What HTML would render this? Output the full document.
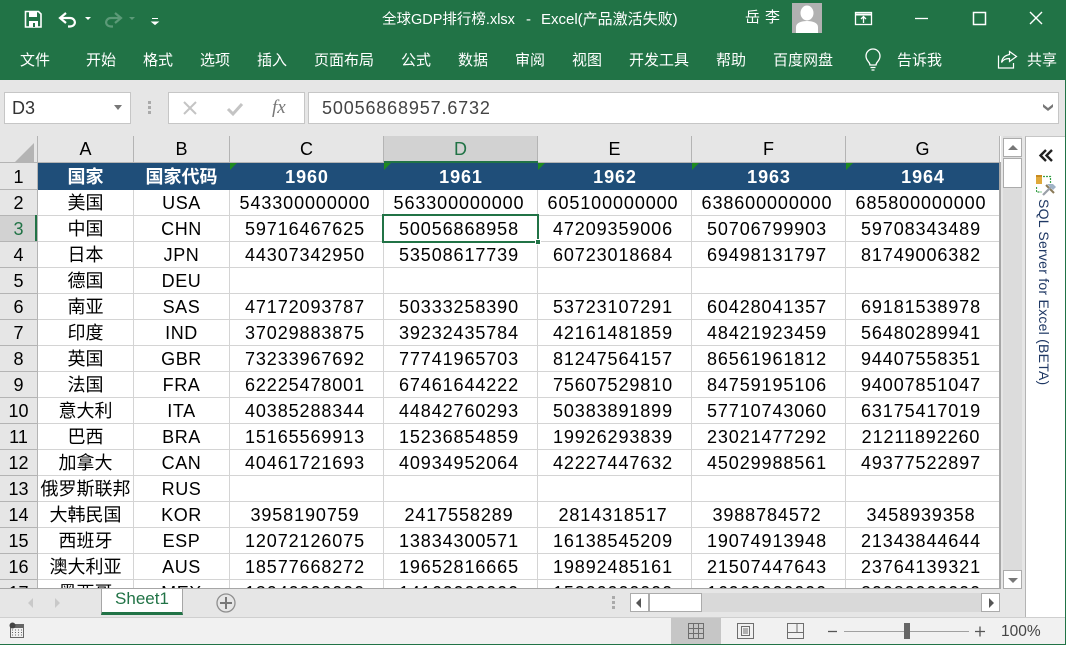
<!DOCTYPE html>
<html><head><meta charset="utf-8"><style>
*{box-sizing:border-box}
html,body{margin:0;padding:0}
body{width:1066px;height:645px;position:relative;overflow:hidden;background:#e6e6e6;font-family:"Liberation Sans","Noto Sans CJK SC",sans-serif}
.a{position:absolute}
.m{position:absolute;top:51px;color:#fff;font-size:15px;line-height:20px;white-space:nowrap}
#grid{position:absolute;left:0;top:136px;width:1001px;height:452px;overflow:hidden;background:#fff}
table{border-collapse:separate;border-spacing:0;table-layout:fixed;width:1000px;position:absolute;left:0;top:0}
td,th{padding:0;height:26px;text-align:center;font-weight:400;font-size:18px;letter-spacing:.9px;color:#000;border-right:1px solid #d4d4d4;border-bottom:1px solid #d4d4d4;white-space:nowrap;overflow:hidden;line-height:23px}
td{padding:2px 3px 0 0}
td.c{letter-spacing:0;font-size:18px;padding-right:0}
td:nth-child(3){letter-spacing:.6px}
th{background:#e6e6e6;border-right:1px solid #b4b4b4;border-bottom:1px solid #b4b4b4;letter-spacing:0;padding-top:2px}
tr.top th{padding-top:0;line-height:25px}
tr.h td,tr.h th{height:27px}
tr.h td{background:#1f4e79;color:#fff;font-weight:700;border-color:#1f4e79;padding-right:0;padding-left:1px}
tr.h td.c{letter-spacing:0;padding-left:0}
.tri{position:absolute;top:27px;width:0;height:0;border-top:7px solid #1f8a1f;border-right:7px solid transparent}
</style></head><body>
<div class="a" style="left:0;top:0;width:1066px;height:80px;background:#217346"></div>

<svg class="a" style="left:0;top:0" width="180" height="40" fill="none">
<path d="M25.500 11.500h13l2.500 2.500v13h-15.500z" stroke="#fff" stroke-width="1.600"/>
<rect x="29" y="11" width="8" height="6" fill="#fff"/>
<rect x="29" y="21" width="9" height="6" fill="#fff"/><rect x="33" y="23" width="2" height="4" fill="#217346"/>
<path d="M66 13l-6 5 6 5" stroke="#fff" stroke-width="2.200"/><path d="M60.500 18H70c6 0 7 8 0 8.500h-2" stroke="#fff" stroke-width="2.200"/>
<path d="M85 17h6l-3 3z" fill="#fff"/>
<path d="M115 13l6 5-6 5" stroke="#5c9a78" stroke-width="2.200"/><path d="M120.500 18H111c-6 0-7 8 0 8.500h2" stroke="#5c9a78" stroke-width="2.200"/>
<path d="M129 17h6l-3 3z" fill="#5c9a78"/>
<path d="M152 18.500h6M152 22h6l-3 2.500z" stroke="#fff" stroke-width="1" fill="#fff"/>
</svg>

<div class="a" style="left:382px;top:10px;color:#fff;font-size:14.500px;line-height:20px;white-space:nowrap">全球GDP排行榜.xlsx</div>
<div class="a" style="left:526px;top:10px;color:#fff;font-size:15px;line-height:20px;white-space:nowrap">-</div>
<div class="a" style="left:541px;top:10px;color:#fff;font-size:15px;line-height:20px;white-space:nowrap">Excel(产品激活失败)</div>
<div class="a" style="left:745px;top:8px;color:#fff;font-size:15px;line-height:20px;letter-spacing:5px;white-space:nowrap">岳李</div>
<svg class="a" style="left:792px;top:3px" width="30" height="30"><rect width="30" height="30" fill="#b1b1b1"/><ellipse cx="15" cy="10" rx="6.500" ry="7.500" fill="#fff"/><path d="M4 30v-6c0-4 5-6 11-6s11 2 11 6v6z" fill="#fff"/></svg>
<svg class="a" style="left:850px;top:5px" width="200" height="26" fill="none" stroke="#fff" stroke-width="1.300">
<rect x="5.500" y="7.500" width="16" height="12"/><path d="M5.500 9.500h16" stroke-width="2"/><path d="M13.500 18v-6M11 14l2.500-2.500L16 14"/>
<path d="M65 13.500h13"/>
<rect x="123.500" y="7.500" width="12" height="12" stroke-width="1.500"/>
<path d="M180 7l12 12M192 7l-12 12" stroke-width="1.400"/>
</svg>

<div class="m" style="left:20px">文件</div>
<div class="m" style="left:86px">开始</div>
<div class="m" style="left:143px">格式</div>
<div class="m" style="left:200px">选项</div>
<div class="m" style="left:257px">插入</div>
<div class="m" style="left:314px">页面布局</div>
<div class="m" style="left:401px">公式</div>
<div class="m" style="left:458px">数据</div>
<div class="m" style="left:515px">审阅</div>
<div class="m" style="left:572px">视图</div>
<div class="m" style="left:629px">开发工具</div>
<div class="m" style="left:716px">帮助</div>
<div class="m" style="left:773px">百度网盘</div>
<div class="m" style="left:897px">告诉我</div>
<div class="m" style="left:1027px">共享</div>
<svg class="a" style="left:860px;top:48px" width="30" height="26" fill="none" stroke="#fff" stroke-width="1.300"><path d="M10 17c0-3-4-4-4-9a7 7 0 0 1 14 0c0 5-4 6-4 9z"/><path d="M10.500 19.500h5M11.500 22h3"/></svg>
<svg class="a" style="left:996px;top:49px" width="24" height="22" fill="none" stroke="#fff" stroke-width="1.200"><path d="M2.500 6.500v12.500h15v-5"/><path d="M13.500 2.500l7 5-7 5v-3c-4 0-6 1-8 4 .5-4 3-7 8-8z"/></svg>

<div class="a" style="left:0;top:80px;width:1066px;height:56px;background:#e6e6e6"></div>
<div class="a" style="left:4px;top:92px;width:127px;height:32px;background:#fff;border:1px solid #c6c6c6;font-size:18px;line-height:30px;padding-left:7px;color:#333">D3</div>
<div class="a" style="left:114px;top:105px;border-top:5px solid #777;border-left:4px solid transparent;border-right:4px solid transparent;width:0"></div>
<div class="a" style="left:148px;top:101px;width:3px;height:3px;background:#aaa;box-shadow:0 5px #aaa,0 10px #aaa"></div>
<div class="a" style="left:168px;top:92px;width:137px;height:32px;background:#fff;border:1px solid #c6c6c6"></div>
<svg class="a" style="left:180px;top:98px" width="110" height="20" fill="none"><path d="M4 4l12 12M16 4L4 16" stroke="#c4c4c4" stroke-width="2"/><path d="M48 11l5 5 9-10" stroke="#c4c4c4" stroke-width="3"/></svg>
<div class="a" style="left:272px;top:96px;font-family:'Liberation Serif',serif;font-style:italic;font-size:19px;line-height:24px;color:#777">fx</div>
<div class="a" style="left:308px;top:92px;width:751px;height:32px;background:#fff;border:1px solid #c6c6c6;font-size:18px;line-height:30px;padding-left:13px;letter-spacing:.85px;color:#444">50056868957.6732</div>
<svg class="a" style="left:1042px;top:103px" width="12" height="9"><path d="M1 1l5 4 5-4v3l-5 4-5-4z" fill="#777"/></svg>

<div id="grid">
<table>
<colgroup><col style="width:38px"><col style="width:96px"><col style="width:96px"><col style="width:154px"><col style="width:154px"><col style="width:154px"><col style="width:154px"><col style="width:154px"></colgroup>
<tr class="top" style="height:27px"><th style="height:27px"></th><th>A</th><th>B</th><th>C</th><th style="background:#d2d2d2;color:#217346">D</th><th>E</th><th>F</th><th>G</th></tr>
<tr class="h"><th>1</th><td class="c">国家</td><td class="c">国家代码</td><td>1960</td><td>1961</td><td>1962</td><td>1963</td><td>1964</td></tr>
<tr><th>2</th><td class="c">美国</td><td class="c">USA</td><td>543300000000</td><td>563300000000</td><td>605100000000</td><td>638600000000</td><td>685800000000</td></tr>
<tr><th style="background:#d2d2d2;color:#217346">3</th><td class="c">中国</td><td class="c">CHN</td><td>59716467625</td><td>50056868958</td><td>47209359006</td><td>50706799903</td><td>59708343489</td></tr>
<tr><th>4</th><td class="c">日本</td><td class="c">JPN</td><td>44307342950</td><td>53508617739</td><td>60723018684</td><td>69498131797</td><td>81749006382</td></tr>
<tr><th>5</th><td class="c">德国</td><td class="c">DEU</td><td></td><td></td><td></td><td></td><td></td></tr>
<tr><th>6</th><td class="c">南亚</td><td class="c">SAS</td><td>47172093787</td><td>50333258390</td><td>53723107291</td><td>60428041357</td><td>69181538978</td></tr>
<tr><th>7</th><td class="c">印度</td><td class="c">IND</td><td>37029883875</td><td>39232435784</td><td>42161481859</td><td>48421923459</td><td>56480289941</td></tr>
<tr><th>8</th><td class="c">英国</td><td class="c">GBR</td><td>73233967692</td><td>77741965703</td><td>81247564157</td><td>86561961812</td><td>94407558351</td></tr>
<tr><th>9</th><td class="c">法国</td><td class="c">FRA</td><td>62225478001</td><td>67461644222</td><td>75607529810</td><td>84759195106</td><td>94007851047</td></tr>
<tr><th>10</th><td class="c">意大利</td><td class="c">ITA</td><td>40385288344</td><td>44842760293</td><td>50383891899</td><td>57710743060</td><td>63175417019</td></tr>
<tr><th>11</th><td class="c">巴西</td><td class="c">BRA</td><td>15165569913</td><td>15236854859</td><td>19926293839</td><td>23021477292</td><td>21211892260</td></tr>
<tr><th>12</th><td class="c">加拿大</td><td class="c">CAN</td><td>40461721693</td><td>40934952064</td><td>42227447632</td><td>45029988561</td><td>49377522897</td></tr>
<tr><th>13</th><td class="c">俄罗斯联邦</td><td class="c">RUS</td><td></td><td></td><td></td><td></td><td></td></tr>
<tr><th>14</th><td class="c">大韩民国</td><td class="c">KOR</td><td>3958190759</td><td>2417558289</td><td>2814318517</td><td>3988784572</td><td>3458939358</td></tr>
<tr><th>15</th><td class="c">西班牙</td><td class="c">ESP</td><td>12072126075</td><td>13834300571</td><td>16138545209</td><td>19074913948</td><td>21343844644</td></tr>
<tr><th>16</th><td class="c">澳大利亚</td><td class="c">AUS</td><td>18577668272</td><td>19652816665</td><td>19892485161</td><td>21507447643</td><td>23764139321</td></tr>
<tr><th>17</th><td class="c">墨西哥</td><td class="c">MEX</td><td>13040000000</td><td>14160000000</td><td>15200000000</td><td>16960000000</td><td>20080000000</td></tr>
</table>
<div class="tri" style="left:230px"></div><div class="tri" style="left:384px"></div><div class="tri" style="left:538px"></div><div class="tri" style="left:692px"></div><div class="tri" style="left:846px"></div>
<svg class="a" style="left:14px;top:7px" width="21" height="20"><path d="M20 0v19H1z" fill="#b4b4b4"/></svg>
<div class="a" style="left:384px;top:25px;width:154px;height:2px;background:#217346"></div>
<div class="a" style="left:35px;top:79px;width:2px;height:26px;background:#217346"></div>
<div class="a" style="left:382px;top:78px;width:157px;height:29px;border:2px solid #217346"></div>
<div class="a" style="left:535px;top:103px;width:6px;height:6px;background:#217346;border:1px solid #fff"></div>
</div>
<div class="a" style="left:999px;top:162px;width:2px;height:426px;background:#a6a6a6"></div>
<div class="a" style="left:0;top:588px;width:1001px;height:1px;background:#a6a6a6"></div>

<div class="a" style="left:1003px;top:136px;width:19px;height:453px;background:#dcdcdc"></div>
<div class="a" style="left:1003px;top:138px;width:19px;height:19px;background:#fff;border:1px solid #ababab"></div>
<div class="a" style="left:1008px;top:145px;border-bottom:5px solid #777;border-left:5px solid transparent;border-right:5px solid transparent;width:0"></div>
<div class="a" style="left:1003px;top:158px;width:19px;height:30px;background:#fff;border:1px solid #ababab"></div>
<div class="a" style="left:1003px;top:570px;width:19px;height:19px;background:#fff;border:1px solid #ababab"></div>
<div class="a" style="left:1008px;top:578px;border-top:5px solid #777;border-left:5px solid transparent;border-right:5px solid transparent;width:0"></div>

<div class="a" style="left:1025px;top:136px;width:40px;height:482px;background:#fff;border-left:1px solid #b4b4b4;border-top:1px solid #c6c6c6"></div>
<svg class="a" style="left:1036px;top:146px" width="24" height="52" fill="none">
<path d="M10 4l-5.500 5.500L10 15M16 4l-5.500 5.500L16 15" stroke="#222" stroke-width="2.400"/>
<rect x="0" y="29" width="6" height="9" fill="#e0a93b"/><rect x="0" y="29" width="6" height="2" fill="#c88a20"/>
<path d="M7 30.500h7.500v7M.500 41v5h5" stroke="#3aa04a" stroke-width="1.200" stroke-dasharray="2 1"/>
<path d="M10 39l8 8" stroke="#8a7a58" stroke-width="2"/><path d="M7 49l9-9" stroke="#9aa0a8" stroke-width="2.200"/><path d="M11 38h6l3 3-3 3z" fill="#9fb2c6"/>
</svg>
<div class="a" style="left:1035px;top:199px;writing-mode:vertical-rl;font-size:14px;line-height:18px;letter-spacing:.25px;color:#1f3864;white-space:nowrap">SQL Server for Excel (BETA)</div>

<div class="a" style="left:101px;top:589px;width:82px;height:26px;background:#fff;border-left:1px solid #a6a6a6;border-right:1px solid #a6a6a6;border-bottom:3px solid #217346;color:#217346;font-size:17px;line-height:20px;text-align:center">Sheet1</div>
<svg class="a" style="left:20px;top:592px" width="220" height="24" fill="none">
<path d="M13 6l-5 5 5 5z" fill="#c9c9c9"/><path d="M35 6l5 5-5 5z" fill="#c9c9c9"/>
<circle cx="206" cy="11" r="9" stroke="#8f8f8f" stroke-width="1.300"/><path d="M200 11h12M206 5v12" stroke="#777" stroke-width="2"/>
</svg>
<div class="a" style="left:612px;top:596px;width:3px;height:3px;background:#aaa;box-shadow:0 5px #aaa,0 10px #aaa"></div>
<div class="a" style="left:630px;top:593px;width:370px;height:19px;background:#d9d9d9"></div>
<div class="a" style="left:630px;top:593px;width:19px;height:19px;background:#fff;border:1px solid #ababab"></div>
<div class="a" style="left:636px;top:598px;border-right:5px solid #555;border-top:5px solid transparent;border-bottom:5px solid transparent;width:0"></div>
<div class="a" style="left:649px;top:593px;width:53px;height:19px;background:#fff;border:1px solid #ababab"></div>
<div class="a" style="left:981px;top:593px;width:19px;height:19px;background:#fff;border:1px solid #ababab"></div>
<div class="a" style="left:989px;top:598px;border-left:5px solid #555;border-top:5px solid transparent;border-bottom:5px solid transparent;width:0"></div>

<div class="a" style="left:1025px;top:617px;width:41px;height:1px;background:#c6c6c6"></div>
<div class="a" style="left:0;top:617px;width:1066px;height:27px;background:#f1f1f1;border-top:1px solid #cfcfcf"></div>
<div class="a" style="left:0;top:644px;width:1066px;height:1px;background:#217346"></div>
<div class="a" style="left:1065px;top:0;width:1px;height:645px;background:#217346"></div>
<svg class="a" style="left:8px;top:622px" width="18" height="18" fill="none"><rect x="2.500" y="4.500" width="13" height="11" stroke="#666"/><rect x="5" y="2" width="11" height="4" fill="#666"/><circle cx="4.500" cy="3.500" r="3" fill="#444"/><path d="M4 8h1M7 8h1M10 8h1M13 8h1M4 10.500h1M7 10.500h1M10 10.500h1M13 10.500h1M4 13h1M7 13h1M10 13h1M13 13h1" stroke="#666"/></svg>
<div class="a" style="left:671px;top:618px;width:50px;height:26px;background:#c6c6c6"></div>
<svg class="a" style="left:680px;top:618px" width="310" height="26" fill="none" stroke="#6e6e6e">
<path d="M8.500 5.500h15v15h-15zM13.500 5.500v15M18.500 5.500v15M8.500 10.500h15M8.500 15.500h15"/>
<path d="M57.500 5.500h16v15h-16zM61.500 8.500h8v9h-8zM63 11h5M63 13h5M63 15h5"/>
<path d="M107.500 5.500h16v15h-16zM107.500 14.500h9.500v-9M117 14.500h6.500"/>
<path d="M148 13.500h9" stroke="#555" stroke-width="1.300"/>
<path d="M164 13.500h125" stroke="#a0a0a0"/>
<path d="M295 13.500h10M300 8.500v10" stroke="#555" stroke-width="1.300"/>
<rect x="224" y="5" width="6" height="16" fill="#666" stroke="none"/>
</svg>
<div class="a" style="left:1001px;top:622px;font-size:15.500px;line-height:20px;color:#444">100%</div>
</body></html>
